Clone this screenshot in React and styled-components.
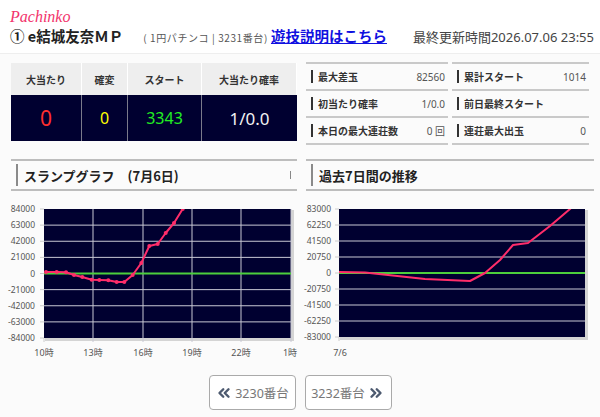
import React from "react";
import styled, { createGlobalStyle } from "styled-components";
import { ChevronsLeft, ChevronsRight } from "lucide-react";

const GlobalStyle = createGlobalStyle`
  body {
    margin: 0;
    background: #fff;
    font-family: "Noto Sans", "Noto Sans CJK JP", sans-serif;
  }
`;

const Page = styled.div`
  width: 600px;
  height: 417px;
  overflow: hidden;
  background: #fbfbfb;
`;

const Header = styled.header`
  background: #fff;
  padding: 8px 6px 7px 10px;
  border-bottom: 1px solid #eee;
`;

const Brand = styled.div`
  font-family: "Liberation Serif", serif;
  font-style: italic;
  font-size: 16px;
  line-height: 18px;
  color: #f2336b;
`;

const TitleRow = styled.div`
  display: flex;
  align-items: baseline;
  height: 20px;
  line-height: 20px;
`;

const Title = styled.h1`
  margin: 0;
  font-size: 14.5px;
  font-weight: 700;
  color: #222;
  font-family: "Noto Sans CJK JP", sans-serif;
`;

const Sub = styled.span`
  margin-left: 20px;
  font-size: 10px;
  color: #555;
  font-family: "Noto Sans CJK JP", sans-serif;
  letter-spacing: 0.6px;
`;

const HelpLink = styled.a`
  margin-left: 3px;
  font-size: 14.5px;
  font-weight: 700;
  color: #1010e0;
  text-decoration: underline;
  font-family: "Noto Sans CJK JP", sans-serif;
`;

const Updated = styled.span`
  margin-left: auto;
  font-size: 13px;
  color: #444;
  font-family: "Noto Sans", "Noto Sans CJK JP", sans-serif;
`;

const Main = styled.main`
  display: grid;
  grid-template-columns: 286px 288px;
  column-gap: 9px;
  row-gap: 14px;
  padding: 9px 6px 0 11px;
`;

const StatsTable = styled.div`
  display: grid;
  grid-template-columns: 71px 46px 74px 95px;
  grid-template-rows: 32px 46px;
`;

const StatHead = styled.div`
  background: #eeeeee;
  border-right: 1px solid #fff;
  display: flex;
  align-items: center;
  justify-content: center;
  font-size: 10px;
  font-weight: 700;
  color: #333;
  font-family: "Noto Sans CJK JP", sans-serif;
  &:last-of-type { border-right: none; }
`;

const StatValue = styled.div`
  background: #000030;
  border-right: 1px solid #7a7a8a;
  display: flex;
  align-items: center;
  justify-content: center;
  font-size: ${(p) => p.$size}px;
  color: ${(p) => p.$color};
  font-family: "Noto Sans", sans-serif;
  &:last-child { border-right: none; }
`;

const InfoGrid = styled.div`
  display: grid;
  grid-template-columns: 142px 137px;
  column-gap: 4px;
  width: 283px;
  margin-top: -1px;
`;

const InfoCell = styled.div`
  display: flex;
  align-items: center;
  height: 25px;
  border-top: 2px solid #c9c9c9;
  padding: 0 3px 0 5px;
  &:nth-last-child(-n + 2) { border-bottom: 2px solid #c9c9c9; }
`;

const InfoLabel = styled.span`
  display: flex;
  align-items: center;
  font-size: 10px;
  font-weight: 700;
  color: #333;
  font-family: "Noto Sans CJK JP", sans-serif;
  &::before {
    content: "";
    width: 2px;
    height: 13px;
    background: #333;
    margin-right: 5px;
  }
`;

const InfoValue = styled.span`
  margin-left: auto;
  font-size: 10px;
  color: #555;
  font-family: "Noto Sans", "Noto Sans CJK JP", sans-serif;
`;

const Column = styled.section`
  display: flex;
  flex-direction: column;
`;

const Heading = styled.div`
  display: flex;
  align-items: center;
  height: 28px;
  border-top: 2px solid #bdbdbd;
  border-bottom: 2px solid #bdbdbd;
  padding: 0 6px 0 5px;
  font-size: 13px;
  font-weight: 700;
  color: #222;
  font-family: "Noto Sans CJK JP", sans-serif;
  &::before {
    content: "";
    width: 2px;
    height: 22px;
    background: #8a8a8a;
    margin-right: 6px;
  }
`;

const HeadMark = styled.span`
  margin-left: auto;
  width: 1px;
  height: 8px;
  background: #888;
`;

const ChartSvg = styled.svg`
  display: block;
  margin-top: 5px;
  overflow: visible;
  font-family: "Noto Sans", "Noto Sans CJK JP", sans-serif;
`;

const NavRow = styled.nav`
  display: flex;
  justify-content: center;
  gap: 9px;
  margin-top: 9px;
`;

const NavButton = styled.button`
  width: 87px;
  height: 35px;
  border: 1px solid #aaa;
  border-radius: 4px;
  background: #fff;
  display: flex;
  align-items: center;
  justify-content: center;
  gap: 2px;
  font-size: 12.5px;
  color: #777;
  font-family: "Noto Sans", "Noto Sans CJK JP", sans-serif;
  padding: 0;
  svg { color: #4d5a70; }
`;

function Chart({ width, plot, yLabels, xLabels, vLines, points, dots, id, labelGap }) {
  const { x0, x1, y0, y1 } = plot;
  const n = yLabels.length - 1;
  const step = (y1 - y0) / n;
  const zeroY = y0 + step * (n / 2);
  const path = points.map((p) => p.join(",")).join(" ");
  return (
    <ChartSvg width={width} height={170} viewBox={`0 0 ${width} 170`}>
      <defs>
        <clipPath id={id}>
          <rect x={x0} y={y0} width={x1 - x0} height={y1 - y0} />
        </clipPath>
      </defs>
      <rect x={x0 + 1} y={y0 + 1} width={x1 - x0 + 2} height={y1 - y0 + 2} fill="#d4d4d4" />
      <rect x={x0} y={y0} width={x1 - x0} height={y1 - y0} fill="#000030" />
      {yLabels.map((l, i) => {
        const y = y0 + step * i;
        return (
          <g key={l}>
            {i !== n / 2 && i !== 0 && i !== n && (
              <line x1={x0} x2={x1} y1={y} y2={y} stroke="#c8c8d4" strokeWidth="1" />
            )}
            <line x1={x0 - 4} x2={x0} y1={y} y2={y} stroke="#ccc" strokeWidth="1" />
            <text x={x0 - labelGap} y={y + 3} fontSize="8.5" fill="#555" textAnchor="end">
              {l}
            </text>
          </g>
        );
      })}
      {vLines.map((x) => (
        <line key={x} x1={x} x2={x} y1={y0} y2={y1 + 4} stroke="#c8c8d4" strokeWidth="1" />
      ))}
      <line x1={x0} x2={x0} y1={y1} y2={y1 + 4} stroke="#ccc" strokeWidth="1" />
      <line x1={x0} x2={x1} y1={zeroY} y2={zeroY} stroke="#4ccf3c" strokeWidth="2" />
      <g clipPath={`url(#${id})`}>
        <polyline points={path} fill="none" stroke="#ff2d6a" strokeWidth="2" strokeLinejoin="round" />
        {dots &&
          points.map(([x, y], i) => <circle key={i} cx={x} cy={y} r="2" fill="#ff2d6a" />)}
      </g>
      {xLabels.map(([x, l]) => (
        <text key={l} x={x} y={160} fontSize="9" fill="#555" textAnchor="middle">
          {l}
        </text>
      ))}
    </ChartSvg>
  );
}

const stats = [
  { head: "大当たり", value: "0", color: "#ff2e2e", size: 21 },
  { head: "確変", value: "0", color: "#ffff00", size: 16 },
  { head: "スタート", value: "3343", color: "#22ee22", size: 16 },
  { head: "大当たり確率", value: "1/0.0", color: "#f2f2f2", size: 17 },
];

const info = [
  ["最大差玉", "82560"],
  ["累計スタート", "1014"],
  ["初当たり確率", "1/0.0"],
  ["前日最終スタート", ""],
  ["本日の最大連荘数", "0 回"],
  ["連荘最大出玉", "0"],
];

const leftPoints = [
  [35, 76], [45.7, 76], [55, 76.3], [63, 79], [71.3, 81], [80.7, 83.7], [88.3, 84],
  [97.3, 84.3], [105.7, 86], [113.3, 86], [121.7, 79], [130.3, 67], [138.3, 50],
  [146.7, 48], [154.7, 37], [163, 27], [171.7, 13], [176, 5],
];

const rightPoints = [
  [33, 76], [59, 76.5], [119, 83], [164, 85], [179, 77], [194, 64], [207, 49],
  [222, 47], [244, 30], [264, 13], [270, 7],
];

export default function App() {
  return (
    <Page>
      <GlobalStyle />
      <Header>
        <Brand>Pachinko</Brand>
        <TitleRow>
          <Title>① e結城友奈ＭＰ</Title>
          <Sub>( 1円パチンコ | 3231番台)</Sub>
          <HelpLink href="#">遊技説明はこちら</HelpLink>
          <Updated>最終更新時間2026.07.06 23:55</Updated>
        </TitleRow>
      </Header>
      <Main>
        <StatsTable>
          {stats.map((s) => (
            <StatHead key={s.head}>{s.head}</StatHead>
          ))}
          {stats.map((s) => (
            <StatValue key={s.head} $color={s.color} $size={s.size}>
              {s.value}
            </StatValue>
          ))}
        </StatsTable>
        <InfoGrid>
          {info.map(([label, value]) => (
            <InfoCell key={label}>
              <InfoLabel>{label}</InfoLabel>
              <InfoValue>{value}</InfoValue>
            </InfoCell>
          ))}
        </InfoGrid>
        <Column>
          <Heading>
            スランプグラフ　(7月6日)
            <HeadMark />
          </Heading>
          <Chart
            id="clipL"
            width={286}
            labelGap={9}
            plot={{ x0: 33, x1: 280, y0: 13, y1: 142 }}
            yLabels={["84000", "63000", "42000", "21000", "0", "-21000", "-42000", "-63000", "-84000"]}
            xLabels={[[33, "10時"], [82, "13時"], [132, "16時"], [181, "19時"], [230, "22時"], [279, "1時"]]}
            vLines={[82, 132, 181, 230, 280]}
            points={leftPoints}
            dots
          />
        </Column>
        <Column>
          <Heading>過去7日間の推移</Heading>
          <Chart
            id="clipR"
            width={288}
            labelGap={8}
            plot={{ x0: 33, x1: 279, y0: 13, y1: 141 }}
            yLabels={["83000", "62250", "41500", "20750", "0", "-20750", "-41500", "-62250", "-83000"]}
            xLabels={[[34, "7/6"]]}
            vLines={[]}
            points={rightPoints}
            dots={false}
          />
        </Column>
      </Main>
      <NavRow>
        <NavButton>
          <ChevronsLeft size={18} strokeWidth={3.2} />
          3230番台
        </NavButton>
        <NavButton>
          3232番台
          <ChevronsRight size={18} strokeWidth={3.2} />
        </NavButton>
      </NavRow>
    </Page>
  );
}
